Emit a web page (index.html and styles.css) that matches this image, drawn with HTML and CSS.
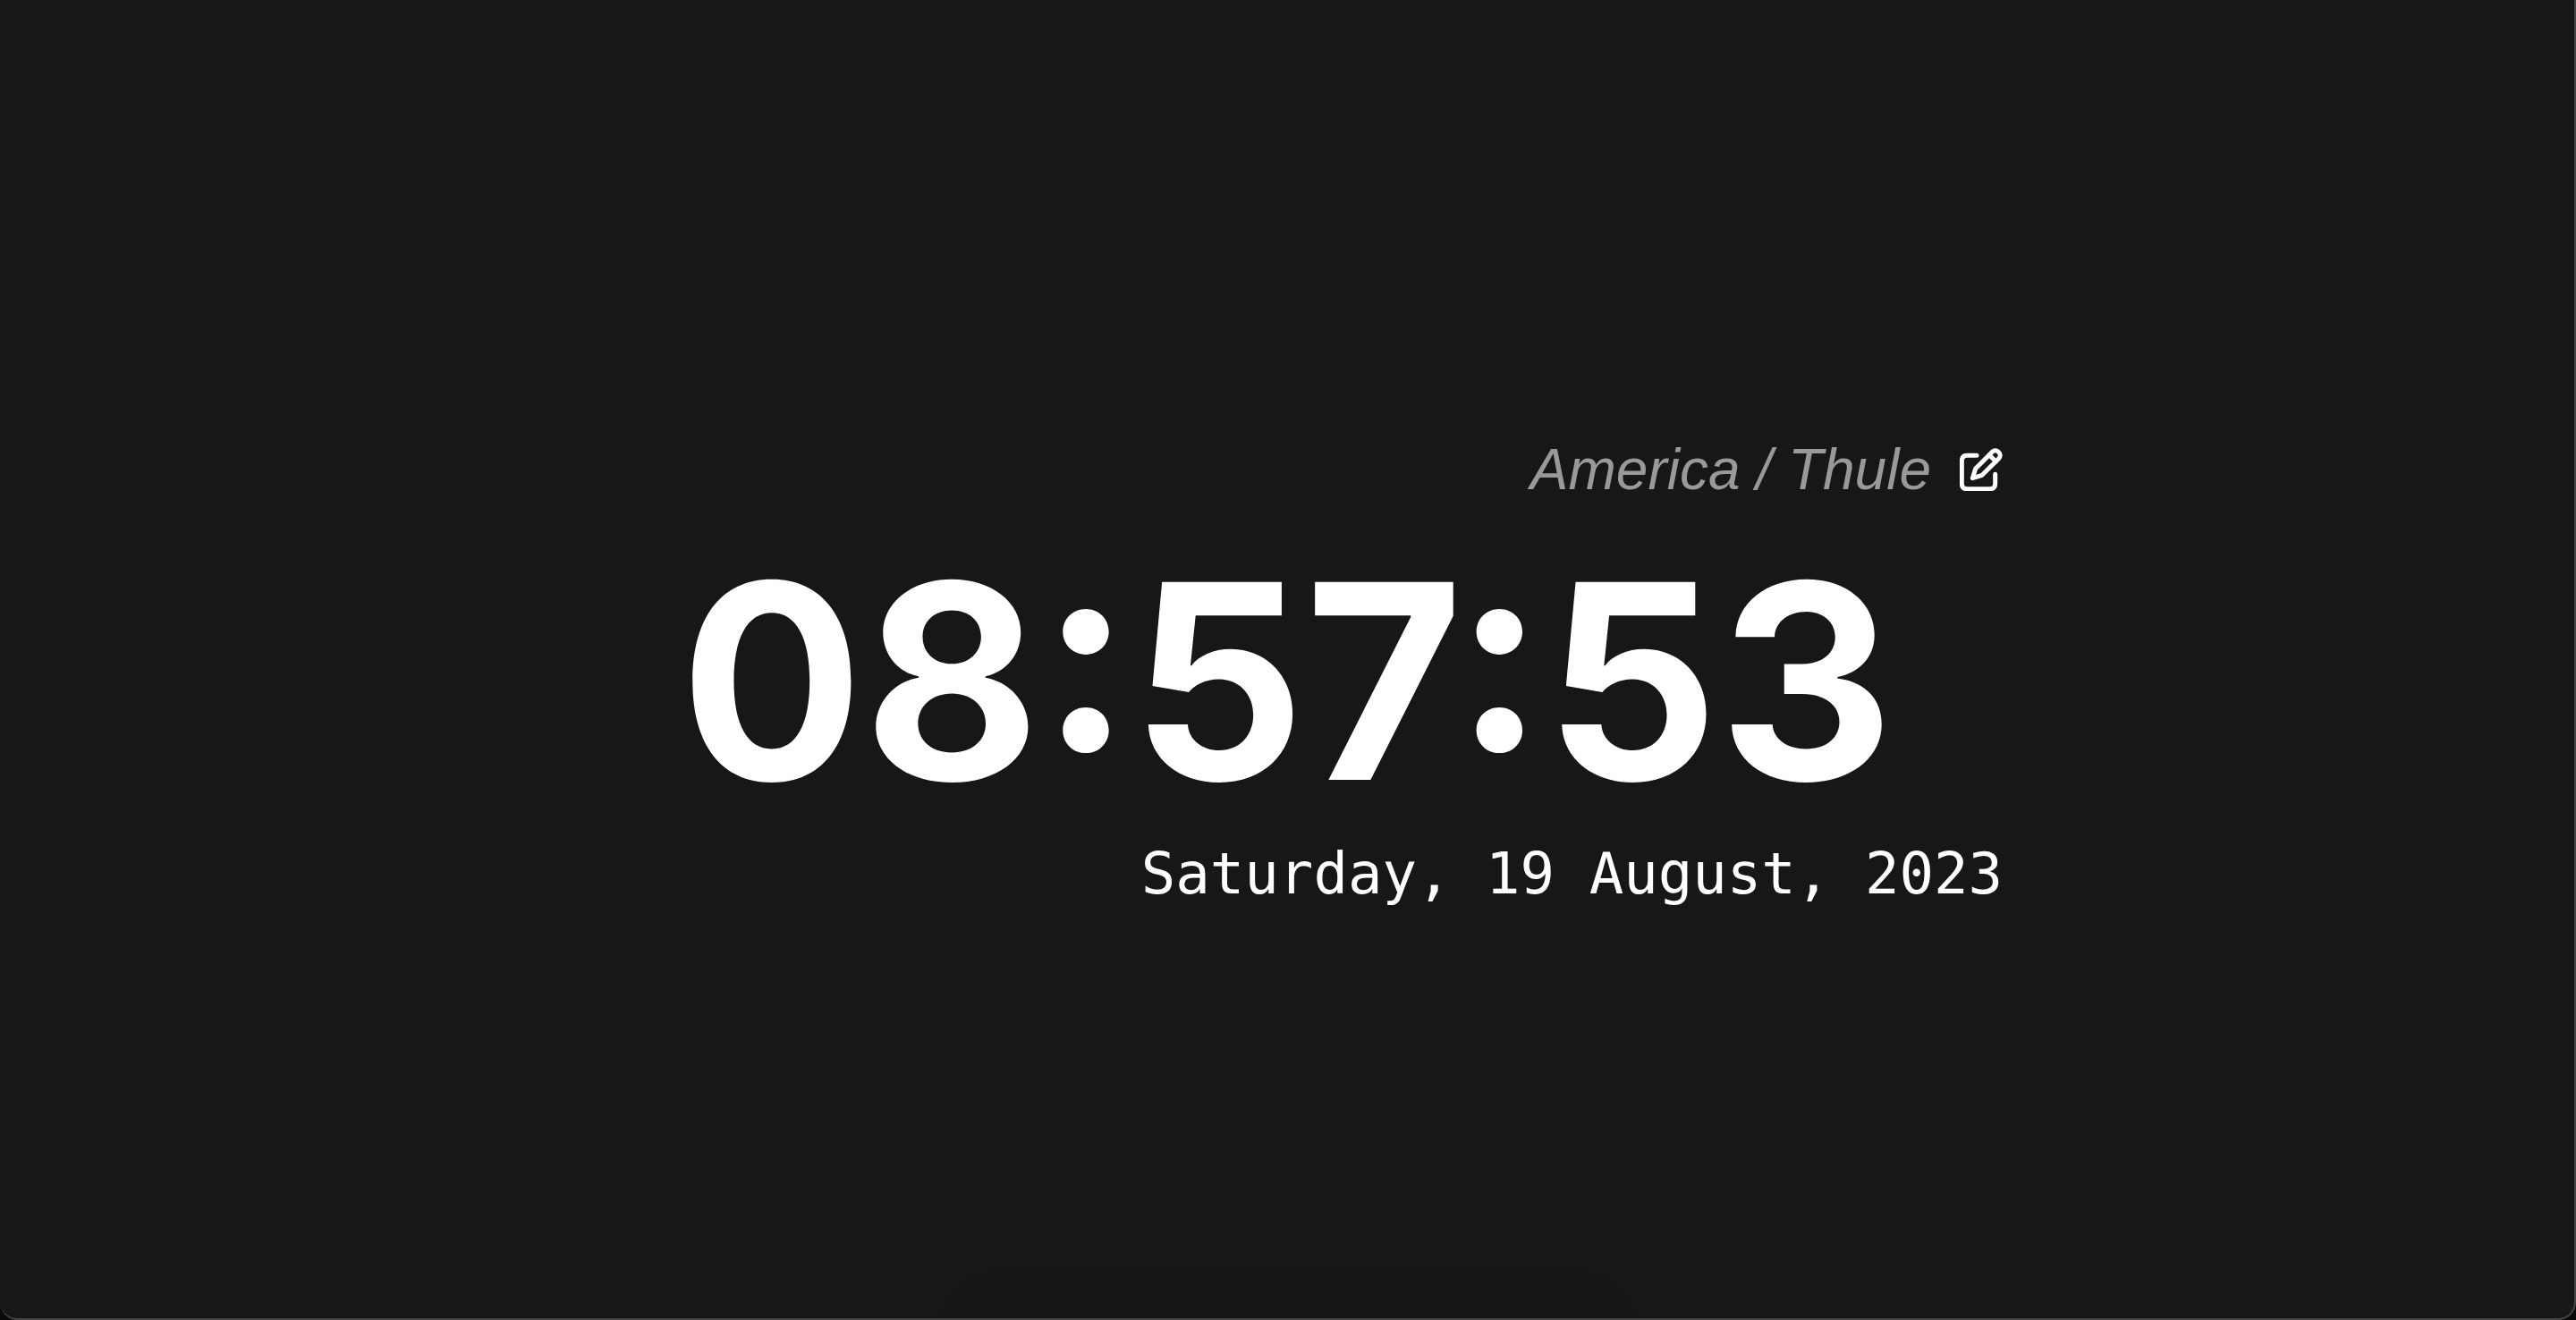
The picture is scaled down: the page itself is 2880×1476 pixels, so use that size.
FILE: index.html
```html
<!DOCTYPE html>
<html lang="en">
<head>
<meta charset="utf-8">
<title>Clock</title>
<link rel="stylesheet" href="styles.css">
</head>
<body>
<main class="screen">
  <section class="clock">
    <div class="zone">
      <span class="zone-name">America / Thule</span>
      <button class="edit" type="button" aria-label="Change time zone">
        <svg class="edit-icon" viewBox="63 57 144 144" aria-hidden="true">
          <path d="M120 82H88Q70 82 70 100V176Q70 194 88 194H164Q182 194 182 176V145"/>
          <path d="M106 158L116 126L172 70C186 56 208 78 194 92L138 148Z"/>
          <path d="M162 80L184 102"/>
        </svg>
      </button>
    </div>
    <time class="time">08:57:53</time>
    <p class="date">Saturday, 19 August, 2023</p>
  </section>
</main>
</body>
</html>
```
FILE: styles.css
```css
body {
  margin: 0;
  background: #0a0a0a;
  color: #fff;
  font-family: Inter, "Liberation Sans", sans-serif;
}

.screen {
  position: relative;
  box-sizing: border-box;
  display: flex;
  align-items: center;
  justify-content: center;
  min-height: 100vh;
  overflow: hidden;
  background: #171717;
  border: solid #454443;
  border-width: 0 2px 2px 0;
  border-radius: 0 0 20px 20px;
}

/* soft shade along the bottom edge */
.screen::after {
  content: "";
  position: absolute;
  top: 100%;
  left: 38%;
  width: 24%;
  height: 40px;
  border-radius: 40px;
  box-shadow: 0 0 64px rgba(0, 0, 0, 0.15);
}

.clock {
  display: flex;
  flex-direction: column;
  width: 1600px;
  max-width: 100%;
  padding-top: 28px;
}

.zone {
  display: flex;
  align-items: center;
  justify-content: flex-end;
  gap: 32px;
  margin-bottom: 20px;
  line-height: 80px;
}

.zone-name {
  color: #999;
  font-family: "Liberation Sans", sans-serif;
  font-size: 64px;
  font-style: italic;
}

.edit {
  display: flex;
  padding: 0;
  border: 0;
  background: none;
  color: #fff;
  cursor: pointer;
}

.edit-icon {
  width: 48px;
  height: 48px;
  fill: none;
  stroke: currentColor;
  stroke-width: 15;
  stroke-linecap: round;
  stroke-linejoin: round;
}

.time {
  font-size: 304px;
  font-weight: 700;
  line-height: 352px;
  text-align: center;
}

.date {
  margin: 0;
  font-family: "DejaVu Sans Mono", monospace;
  font-size: 64px;
  line-height: 80px;
  text-align: right;
}
```
